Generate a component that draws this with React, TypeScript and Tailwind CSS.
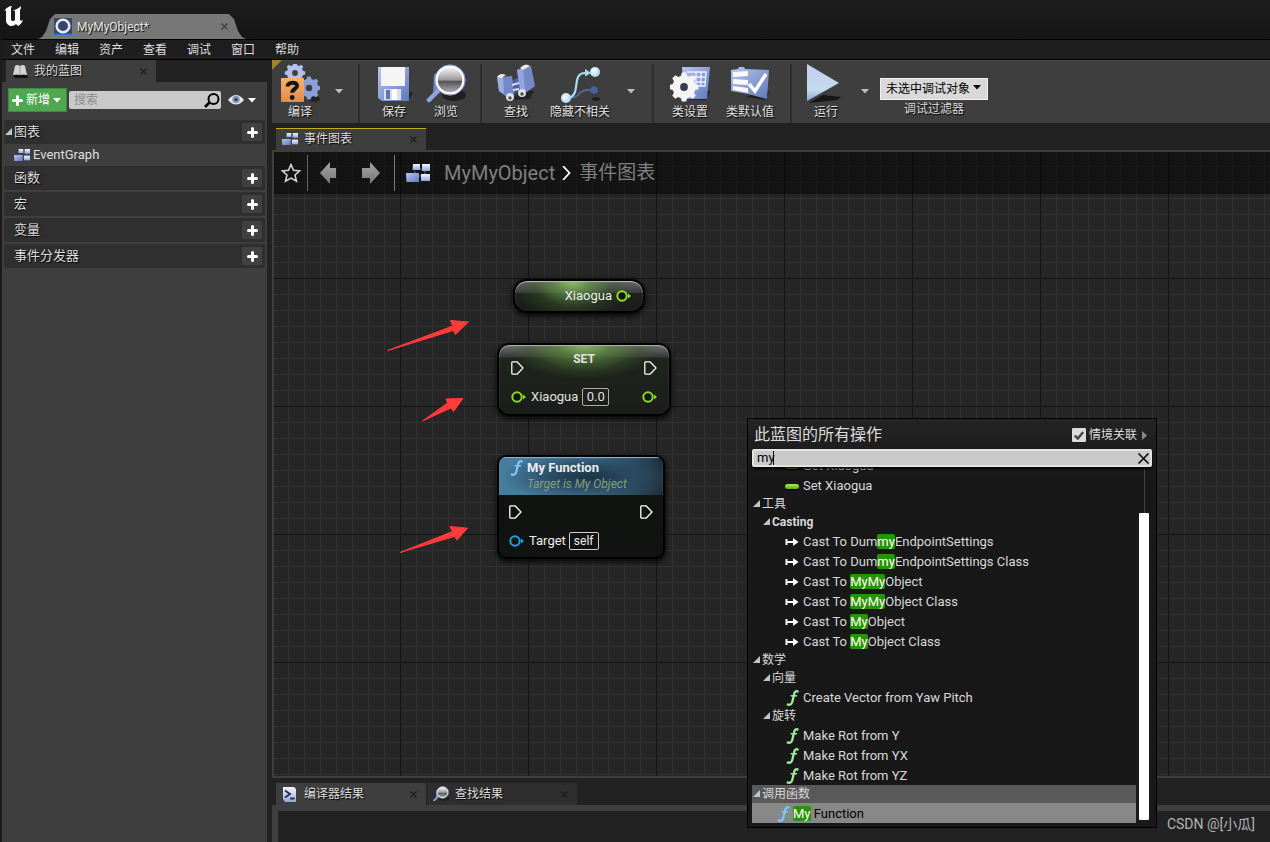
import type { ReactNode } from "react";

const menus = ["文件", "编辑", "资产", "查看", "调试", "窗口", "帮助"];

const sections = [
  { name: "图表", open: true, items: ["EventGraph"] },
  { name: "函数", open: false, items: [] },
  { name: "宏", open: false, items: [] },
  { name: "变量", open: false, items: [] },
  { name: "事件分发器", open: false, items: [] },
];

type Row = {
  kind: "group" | "sub" | "item";
  icon?: "pill" | "cast" | "func" | "call";
  text: string;
  bold?: boolean;
};

const actions: Row[] = [
  { kind: "item", icon: "pill", text: "Get Xiaogua" },
  { kind: "item", icon: "pill", text: "Set Xiaogua" },
  { kind: "group", text: "工具" },
  { kind: "sub", text: "Casting", bold: true },
  { kind: "item", icon: "cast", text: "Cast To DummyEndpointSettings" },
  { kind: "item", icon: "cast", text: "Cast To DummyEndpointSettings Class" },
  { kind: "item", icon: "cast", text: "Cast To MyMyObject" },
  { kind: "item", icon: "cast", text: "Cast To MyMyObject Class" },
  { kind: "item", icon: "cast", text: "Cast To MyObject" },
  { kind: "item", icon: "cast", text: "Cast To MyObject Class" },
  { kind: "group", text: "数学" },
  { kind: "sub", text: "向量" },
  { kind: "item", icon: "func", text: "Create Vector from Yaw Pitch" },
  { kind: "sub", text: "旋转" },
  { kind: "item", icon: "func", text: "Make Rot from Y" },
  { kind: "item", icon: "func", text: "Make Rot from YX" },
  { kind: "item", icon: "func", text: "Make Rot from YZ" },
];

function Gradients() {
  return (
    <svg className="absolute h-0 w-0" aria-hidden="true">
      <defs>
        <linearGradient id="blue" x1="0" y1="0" x2="1" y2="1">
          <stop offset="0" stopColor="#b9c7ee" />
          <stop offset="1" stopColor="#5e78bd" />
        </linearGradient>
        <linearGradient id="pale" x1="0" y1="0" x2="0" y2="1">
          <stop offset="0" stopColor="#f4f7ff" />
          <stop offset="1" stopColor="#93a5dc" />
        </linearGradient>
        <linearGradient id="play" x1="0" y1="0" x2="0" y2="1">
          <stop offset="0" stopColor="#c3cdf0" />
          <stop offset="0.7" stopColor="#c2dbee" />
          <stop offset="1" stopColor="#8fa6d8" />
        </linearGradient>
        <linearGradient id="orange" x1="0" y1="0" x2="0" y2="1">
          <stop offset="0" stopColor="#f6b26c" />
          <stop offset="1" stopColor="#e08c48" />
        </linearGradient>
        <linearGradient id="lens" x1="0" y1="0" x2="0" y2="1">
          <stop offset="0" stopColor="#fbfbfb" />
          <stop offset="0.5" stopColor="#9a9a9a" />
          <stop offset="0.55" stopColor="#555" />
          <stop offset="1" stopColor="#b5b5b5" />
        </linearGradient>
        <linearGradient id="arrow" x1="0" y1="0" x2="0" y2="1">
          <stop offset="0" stopColor="#a5a5a5" />
          <stop offset="1" stopColor="#777" />
        </linearGradient>
        <radialGradient id="ball" cx="0.4" cy="0.4">
          <stop offset="0" stopColor="#fff" />
          <stop offset="1" stopColor="#b4dcf5" />
        </radialGradient>
      </defs>
    </svg>
  );
}

function Close() {
  return (
    <svg className="h-[7px] w-[7px]" viewBox="0 0 7 7" stroke="#1c1c1c" strokeWidth="1.1">
      <path d="M.5 .5l6 6M6.5 .5l-6 6" />
    </svg>
  );
}

function Caret({ color }: { color: string }) {
  return (
    <svg className="h-[5px] w-2 shrink-0" viewBox="0 0 8 5" fill={color}>
      <path d="M0 0h8L4 4.6z" />
    </svg>
  );
}

function Expander() {
  return (
    <svg className="mb-0.5 h-[7px] w-[7px] shrink-0" viewBox="0 0 7 7" fill="#c4c4c4">
      <path d="M7 0v7H0z" />
    </svg>
  );
}

function Plus() {
  return (
    <svg className="h-[11px] w-[11px] shrink-0" viewBox="0 0 11 11" stroke="#fff" strokeWidth="3" strokeLinecap="round">
      <path d="M5.5 1.5v8M1.5 5.5h8" />
    </svg>
  );
}

function GraphIcon({ className }: { className: string }) {
  return (
    <svg className={className} viewBox="0 0 24 18">
      <path d="M10 5H17M12 12H18M9 7v4M19 7v4" stroke="#5b6a94" fill="none" />
      <path d="M7 0h7v6H6.500z" fill="url(#pale)" />
      <path d="M16 0h8v7h-8z" fill="url(#pale)" />
      <path d="M0 9h13v9H.500z" fill="url(#blue)" />
      <path d="M15 10h9v7h-9z" fill="url(#pale)" />
    </svg>
  );
}

function FuncIcon({ color }: { color: string }) {
  return (
    <svg className="h-4 w-3.5 shrink-0" viewBox="0 0 14 16" fill="none" stroke={color}>
      <path d="M13.500 2C11 .200 9.600 1.500 9 4.500L7.400 11.500C6.700 14.600 4.800 15.400 1.800 14.200" strokeWidth="2.300" />
      <path d="M5.600 5.800h6.400" strokeWidth="1.500" />
    </svg>
  );
}

const gear =
  "M-2-10h4l.8 3 2.600 1.100 2.700-1.600 2.800 2.800-1.600 2.700 1.100 2.600 3 .8v4l-3 .8-1.100 2.600 1.600 2.700-2.800 2.800-2.700-1.600-2.600 1.100-.8 3h-4l-.8-3-2.600-1.100-2.700 1.600-2.800-2.800 1.600-2.700-1.100-2.600-3-.8v-4l3-.8 1.100-2.600-1.600-2.700 2.800-2.800 2.700 1.600 2.600-1.100z";

function CompileIcon() {
  return (
    <svg className="h-10 w-10" viewBox="0 0 40 40">
      <ellipse cx="34" cy="35" rx="6" ry="3" fill="#222" />
      <g transform="translate(15 9) scale(.76) translate(0 -3.400)">
        <path d={gear} fill="#b3c0ea" />
        <circle cy="3.400" r="3.800" fill="#3e3e3e" />
      </g>
      <g transform="translate(29 24) scale(.86) translate(0 -3.400)">
        <path d={gear} fill="#8b9fd8" />
        <circle cy="3.400" r="3.800" fill="#3e3e3e" />
      </g>
      <rect x="1" y="14" width="23" height="24" rx="1" fill="url(#orange)" />
      <path d="M7.500 22.500c0-4.500 9.500-5.500 9.500-.500 0 3-4.800 3-4.800 6.800" fill="none" stroke="#151515" strokeWidth="4" />
      <circle cx="12.200" cy="33.500" r="2.400" fill="#151515" />
    </svg>
  );
}

function SaveIcon() {
  return (
    <svg className="h-10 w-10" viewBox="0 0 40 40">
      <path d="M8 36l27-1 4-6-6-3z" fill="#242424" />
      <path d="M4 3h31v34H8l-4-3z" fill="url(#blue)" />
      <path d="M7 3h24v19H7z" fill="#f5f5f5" />
      <path d="M10 25h17v11H10z" fill="#dcdfe8" />
      <path d="M12 26h4v9h-4z" fill="#5b74b4" />
      <path d="M18 25h5v11h-5z" fill="#fff" />
    </svg>
  );
}

function BrowseIcon({ className = "h-10 w-10" }: { className?: string }) {
  return (
    <svg className={className} viewBox="0 0 40 40">
      <ellipse cx="28" cy="31" rx="12" ry="6" fill="#202020" />
      <path d="M8 11l4-3v20l-5 2z" fill="#6f86c4" />
      <path d="M3 36l11-11" stroke="#8ea4df" strokeWidth="4.500" strokeLinecap="round" />
      <circle cx="24" cy="16" r="13.500" fill="url(#lens)" stroke="#fff" strokeWidth="2.500" />
      <circle cx="24" cy="16" r="15.200" fill="none" stroke="#87a0df" strokeWidth="1" />
    </svg>
  );
}

function FindIcon() {
  return (
    <svg className="h-10 w-10" viewBox="0 0 40 40">
      <path d="M15 36l19-1 4-8-10-2z" fill="#242424" />
      <path d="M15 17l10-5v13l-8 5z" fill="#4c629f" />
      <path d="M1 13l15-1 2 18-6 4-9-7z" fill="#7389c8" />
      <path d="M1 13l6-1 1 18-5-3z" fill="#9cade0" />
      <path d="M21 6l14-4 4 20-8 6-7-2z" fill="#7389c8" />
      <path d="M21 6l6-2 2 22-5-1z" fill="#93a5dc" />
      <path d="M1 13q3-5 9-2l-5 3zM24 4q5-6 10-2l-7 4z" fill="#eceae6" />
      <circle cx="14" cy="33" r="4" fill="#dfe1e8" />
      <circle cx="26" cy="29" r="4" fill="#dfe1e8" />
      <circle cx="14" cy="34" r="1.800" fill="#555" />
      <circle cx="26" cy="30" r="1.800" fill="#555" />
      <path d="M16 21l7-2M17 26l6-1" stroke="#d7def4" strokeWidth="2" />
    </svg>
  );
}

function HideIcon() {
  return (
    <svg className="h-10 w-10" viewBox="0 0 40 40" fill="none">
      <ellipse cx="36" cy="35" rx="4" ry="2" fill="#1f1f1f" />
      <path d="M11 34c9 0 6-7 15-8h5" stroke="#4f668f" strokeWidth="1.800" />
      <circle cx="34" cy="26" r="3.800" fill="#486198" />
      <path d="M6 34c17 0 4-25 19-25h3" stroke="#a9dcf5" strokeWidth="2.200" />
      <path d="M25 5l6 4-6 3.500z" fill="#a9dcf5" />
      <circle cx="6" cy="34" r="5" fill="url(#ball)" />
      <circle cx="35" cy="8" r="5" fill="url(#ball)" />
    </svg>
  );
}

function ClassSettingsIcon() {
  return (
    <svg className="h-10 w-10" viewBox="0 0 40 40">
      <path d="M18 36h18l4-9-6-2z" fill="#222" />
      <path d="M12 3h28l-3 32H14z" fill="url(#blue)" />
      <path d="M17 8h19l-1 14H26V8M31 8v14M19 13h16M25 18h11" stroke="#eef2ff" fill="none" strokeWidth="1.300" />
      <g transform="translate(14 23) scale(1.080) translate(0 -3.400)">
        <path d={gear} fill="#f4f4f4" />
        <circle cy="3.400" r="3.600" fill="#343b4b" />
      </g>
    </svg>
  );
}

function DefaultsIcon() {
  return (
    <svg className="h-10 w-10" viewBox="0 0 40 40">
      <path d="M16 33l20 3 3-8-6-3z" fill="#222" />
      <path d="M1 6l7-1 1-2h5l1 2 24 1-2 29-19-5-17-3z" fill="url(#blue)" />
      <path d="M3 8l15-1v5L3 13zM3 15l15 1v5L3 20zM3 22l15 2v5L3 26z" fill="#fafafa" />
      <path d="M19 20l6 7L36 10" stroke="#fff" strokeWidth="3.500" fill="none" />
    </svg>
  );
}

function PlayIcon() {
  return (
    <svg className="h-10 w-10" viewBox="0 0 40 40">
      <path d="M3 39l14-8 18 2-4 3z" fill="#161616" />
      <path d="M1 0l32 19L1 37z" fill="url(#play)" />
    </svg>
  );
}

function ToolButton({ label, width, children }: { label: string; width: string; children: ReactNode }) {
  return (
    <button className={`flex shrink-0 flex-col items-center ${width}`}>
      {children}
      <span className="text-[12px] leading-4 whitespace-nowrap text-[#e2e2e2] [text-shadow:1px_1px_1px_#000]">{label}</span>
    </button>
  );
}

function ToolDrop({ width, label }: { width: string; label: string }) {
  return (
    <button aria-label={label} className={`flex h-[54px] shrink-0 items-center justify-center ${width}`}>
      <Caret color="#bdbdbd" />
    </button>
  );
}

function Divider() {
  return <div className="mx-2 h-[59px] w-0.5 shrink-0 bg-[#2d2d2d]" />;
}

function Toolbar() {
  return (
    <div className="flex h-[63px] items-start border-t border-[#4a4a4a] bg-[#3e3e3e] pt-[3px]">
      <ToolButton label="编译" width="w-14"><CompileIcon /></ToolButton>
      <ToolDrop width="w-[22px]" label="编译选项" />
      <Divider />
      <ToolButton label="保存" width="w-[52px]"><SaveIcon /></ToolButton>
      <ToolButton label="浏览" width="w-[52px]"><BrowseIcon /></ToolButton>
      <Divider />
      <ToolButton label="查找" width="w-[52px]"><FindIcon /></ToolButton>
      <ToolButton label="隐藏不相关" width="w-[76px]"><HideIcon /></ToolButton>
      <ToolDrop width="w-[26px]" label="隐藏选项" />
      <Divider />
      <ToolButton label="类设置" width="w-14"><ClassSettingsIcon /></ToolButton>
      <ToolButton label="类默认值" width="w-16"><DefaultsIcon /></ToolButton>
      <Divider />
      <ToolButton label="运行" width="w-[52px]"><PlayIcon /></ToolButton>
      <ToolDrop width="w-[26px]" label="运行选项" />
      <div className="flex flex-col items-center gap-px pt-3 pl-0.5">
        <div className="relative">
          <select
            id="debug-filter"
            className="h-[22px] w-27 appearance-none border border-[#f0f0f0] bg-[#d9d9d9] pl-[5px] text-[12px] text-black"
          >
            <option>未选中调试对象</option>
          </select>
          <span className="pointer-events-none absolute top-[9px] right-[7px] flex">
            <Caret color="#000" />
          </span>
        </div>
        <label htmlFor="debug-filter" className="text-[12px] leading-4 text-[#dcdcdc] [text-shadow:1px_1px_1px_#000]">
          调试过滤器
        </label>
      </div>
    </div>
  );
}

function Tab({ icon, label, className }: { icon: ReactNode; label: string; className: string }) {
  return (
    <div className={`flex w-[150px] items-center pr-[9px] pl-1.5 ${className}`}>
      <span className="flex w-[22px] shrink-0">{icon}</span>
      <span className="flex-1 text-[12px] leading-4 text-[#dedede] [text-shadow:1px_1px_1px_#000]">{label}</span>
      <button aria-label="关闭"><Close /></button>
    </div>
  );
}

function TitleBar() {
  return (
    <header className="flex h-[39px] items-end bg-gradient-to-b from-[#1d1d1d] to-[#151515]">
      <svg className="mb-3 ml-1 h-[22px] w-5" viewBox="0 0 20 22" fill="#fff">
        <path d="M0 6C2 3 5 1 8 1L7 3v11c0 2 2 3 4 1V6L9 5c3 0 6-2 8-4v2l-1 2v9c0 2 1 2 3 1-1 3-3 5-5 6l-2-2c-2 2-4 2-6 2-2-1-4-3-4-5V7c0-2-1-2-2-1z" />
      </svg>
      <div className="ml-3.5 flex h-[25px] w-[208px] items-center bg-[#777] pr-[18px] pl-4 [clip-path:polygon(0_100%,4px_92%,8px_68%,12px_20%,17px_0,calc(100%-17px)_0,calc(100%-12px)_20%,calc(100%-8px)_68%,calc(100%-4px)_92%,100%_100%)]">
        <svg className="h-[17px] w-[18px] shrink-0" viewBox="0 0 18 17">
          <path d="M0 0h18v17H0z" fill="#35476d" />
          <path d="M0 15.500h18V17H0z" fill="#2c6cf0" />
          <circle cx="9" cy="8" r="6.300" fill="none" stroke="#e8e8e8" strokeWidth="2.600" />
        </svg>
        <span className="ml-[5px] flex-1 text-[12px] leading-4 text-[#e6e6e6] [text-shadow:1px_1px_1px_#000]">MyMyObject*</span>
        <button aria-label="关闭" className="opacity-60"><Close /></button>
      </div>
    </header>
  );
}

function BlueprintPanel() {
  return (
    <aside className="flex w-[267px] shrink-0 flex-col pl-0.5">
      <div className="h-[22px] bg-[#222] pl-1">
        <Tab
          label="我的蓝图"
          className="h-[22px] bg-[#3e3e3e]"
          icon={
            <svg className="h-[15px] w-4" viewBox="0 0 16 15">
              <path d="M1 11h14l1 3H3z" fill="#111" />
              <path d="M3 2q2-2 5 0 3-2 5 0l2 9q-4-1-7 0-3-1-7 0z" fill="#d4d4d4" />
              <path d="M8 2v9" stroke="#999" />
            </svg>
          }
        />
      </div>
      <div className="flex-1 bg-[#3e3e3e] px-0.5 pt-1.5">
        <div className="flex h-6 items-center pl-1">
          <button className="flex h-6 w-[59px] items-center justify-center gap-[3px] border border-[#3d8b3f] bg-[#4fa850] pr-0.5 text-[12px] text-white">
            <Plus />
            <span>新增</span>
            <Caret color="#fff" />
          </button>
          <div className="relative ml-0.5">
            <input
              type="text"
              aria-label="搜索"
              placeholder="搜索"
              className="block h-[18px] w-38 rounded-[2px] bg-[#c9c9c9] pl-[5px] text-[12px] text-black placeholder:text-[#8d8d8d]"
            />
            <svg className="absolute top-0.5 right-px h-[15px] w-4" viewBox="0 0 16 15" fill="none" stroke="#000">
              <circle cx="9.500" cy="6" r="5" strokeWidth="2" />
              <path d="M5.500 9.500L1 14" strokeWidth="2.600" />
            </svg>
          </div>
          <button aria-label="视图选项" className="ml-[7px] flex items-center gap-1">
            <svg className="h-3 w-4" viewBox="0 0 16 12">
              <path d="M0 6Q8-4 16 6 8 15 0 6z" fill="#e8e8e8" />
              <circle cx="8" cy="5.500" r="3.800" fill="#8797ba" />
              <circle cx="8" cy="5.500" r="1.600" fill="#2b3550" />
            </svg>
            <Caret color="#fff" />
          </button>
        </div>
        <div className="mt-2 flex flex-col">
          {sections.map((section) => (
            <div key={section.name}>
              <div className={`flex h-6 items-center rounded-[2px] bg-[#2f2f2f] pr-[3px] pl-px ${section.open ? "" : "mb-0.5"}`}>
                <span className="flex w-[9px]">{section.open && <Expander />}</span>
                <span className="flex-1 text-[13px] leading-4 text-[#dedede] [text-shadow:1px_1px_1px_#000]">{section.name}</span>
                <button aria-label={`添加${section.name}`} className="flex h-[18px] w-5 items-center justify-center rounded-[2px] bg-[#414141]">
                  <Plus />
                </button>
              </div>
              {section.items.map((item) => (
                <div key={item} className="flex h-[22px] items-center gap-[3px] pl-2.5 text-[13px] text-[#dedede]">
                  <GraphIcon className="h-3 w-4" />
                  <span>{item}</span>
                </div>
              ))}
            </div>
          ))}
        </div>
      </div>
    </aside>
  );
}

function ExecPin() {
  return (
    <svg className="h-3.5 w-[13px] shrink-0" viewBox="0 0 13 14" fill="none" stroke="#fff" strokeWidth="1.300">
      <path d="M1.500 .8h4.500L12 7 6 13.200H1.500L.8 12.500v-11z" strokeLinejoin="round" />
    </svg>
  );
}

function DataPin({ color }: { color: string }) {
  return (
    <svg className="h-3 w-[15px] shrink-0" viewBox="0 0 15 12">
      <circle cx="6" cy="6" r="4.700" fill="#10180c" stroke={color} strokeWidth="2" />
      <path d="M12 3.500L15 6l-3 2.500z" fill={color} />
    </svg>
  );
}

function RedArrow({ className, viewBox, points }: { className: string; viewBox: string; points: string }) {
  return (
    <svg className={`absolute ${className}`} viewBox={viewBox}>
      <polygon points={points} fill="#ff3b3b" stroke="#ff3b3b" strokeLinejoin="round" />
    </svg>
  );
}

function GraphNodes() {
  return (
    <>
      <div className="absolute top-[127px] left-[239px] flex h-[34px] w-[132px] items-center justify-end gap-1 rounded-[14px] border-2 border-black bg-[radial-gradient(ellipse_60px_40px_at_45%_0,#8fbe66_0,#64914acc_30%,#3c5c2a66_65%,transparent_100%),linear-gradient(#6a6a6a_0,#3a3a3a_38%,#1c211a_42%,#1c1c1c_100%)] pr-3 text-[13px] text-[#ececec] shadow-[0_2px_6px_#000] inset-shadow-[0_1px_1px_#bbb]">
        <span>Xiaogua</span>
        <DataPin color="#93e22e" />
      </div>

      <div className="absolute top-[191px] left-[223px] flex h-[73px] w-[174px] flex-col rounded-[12px] border-2 border-black bg-[radial-gradient(ellipse_76px_34px_at_50%_0,#8fbe66_0,#5f8a42cc_35%,#3c5c2a66_75%,transparent_100%),linear-gradient(#747474_0,#3a3a3a_12px,#1f241d_13px,#1b1d1a_100%)] px-3 pt-1.5 text-[13px] text-[#ececec] opacity-95 shadow-[0_2px_6px_#000] inset-shadow-[0_1px_1px_#bbb]">
        <div className="flex h-6 items-start justify-between">
          <span className="flex pt-2.5"><ExecPin /></span>
          <span className="text-[12px] leading-4 font-bold">SET</span>
          <span className="flex pt-2.5"><ExecPin /></span>
        </div>
        <div className="mt-[13px] flex items-center">
          <DataPin color="#93e22e" />
          <span className="ml-[5px] leading-4">Xiaogua</span>
          <input aria-label="Xiaogua" defaultValue="0.0" className="ml-1 h-[18px] w-[27px] rounded-[2px] border border-[#b5b5b5] bg-transparent text-center" />
          <span className="ml-auto flex"><DataPin color="#93e22e" /></span>
        </div>
      </div>

      <div className="absolute top-[303px] left-[223px] flex h-[104px] w-[168px] flex-col overflow-hidden rounded-[9px] border-2 border-black bg-[#10120f]/95 text-[13px] text-[#ececec] shadow-[0_2px_6px_#000]">
        <div className="flex h-[38px] bg-[radial-gradient(ellipse_90px_26px_at_56%_52%,#1c3446_0,#284a60_40%,transparent_100%),linear-gradient(90deg,#477c9c_0,#477c9c_55%,#1d2b34_100%)] pt-[3px] pl-2.5 inset-shadow-[0_1px_1px_#8ab6d2]">
          <FuncIcon color="#7cc6ff" />
          <div className="ml-1 flex flex-col">
            <span className="leading-4 font-bold">My Function</span>
            <span className="text-[12px] leading-4 text-[#8b9c79] italic">Target is My Object</span>
          </div>
        </div>
        <div className="mt-2.5 flex items-center justify-between px-2.5">
          <ExecPin />
          <ExecPin />
        </div>
        <div className="mt-[13px] flex items-center px-2.5">
          <DataPin color="#1ba3e8" />
          <span className="ml-[5px] leading-4">Target</span>
          <span className="ml-[3px] h-[18px] rounded-[2px] border border-[#d0d0d0] px-1 text-[12px] leading-4">self</span>
        </div>
      </div>

      <RedArrow
        className="top-[166px] left-[112px] h-9 w-21"
        viewBox="0 0 84 36"
        points="1.7,32.5 66.7,8 64.5,2.500 82.5,4 69.500,16.500 67.3,12.500"
      />
      <RedArrow
        className="top-[242px] left-[146px] h-[30px] w-[46px]"
        viewBox="0 0 46 30"
        points="2.500,27 27.500,9 26,5 43,4.500 33.500,17.500 31,14"
      />
      <RedArrow
        className="top-[370px] left-[124px] h-8 w-18"
        viewBox="0 0 72 32"
        points="2,30.500 54.500,9.500 52,4.500 69.500,6.200 59,18 56.500,14.500"
      />
    </>
  );
}

function Highlighted({ text }: { text: string }) {
  return (
    <span className="whitespace-pre">
      {text.split(/((?:my)+)/i).map((part, i) =>
        i % 2 ? (
          <mark key={i} className="rounded-[2px] bg-[#2a9400] text-white">{part}</mark>
        ) : (
          part
        )
      )}
    </span>
  );
}

function ActionIcon({ icon }: { icon: Row["icon"] }) {
  if (icon === "pill") {
    return <span className="h-[5px] w-3.5 rounded-full bg-gradient-to-b from-[#a8ee5a] to-[#5cae12] shadow-[0_1px_1px_#000]" />;
  }
  if (icon === "cast") {
    return (
      <svg className="h-2 w-3.5" viewBox="0 0 14 8" fill="#fff">
        <path d="M.5 1h2v2h5.500V0L13.500 4 8 8V5H2.500v2h-2z" />
      </svg>
    );
  }
  return <FuncIcon color="#a2ec9c" />;
}

function ActionMenu() {
  return (
    <div className="absolute top-[266px] left-[473px] z-10 flex h-[410px] w-[410px] flex-col border border-black bg-[#1a1a1a] bg-gradient-to-b from-[#242424] to-[#181818] to-15% px-1 pb-1">
      <div className="flex h-[30px] items-center pt-0.5 pr-[5px] pl-0.5">
        <h2 className="flex-1 text-[16px] leading-6 text-[#dcdcdc]">此蓝图的所有操作</h2>
        <label className="flex items-center gap-[3px] text-[12px] text-[#dcdcdc]">
          <span className="relative flex">
            <input type="checkbox" defaultChecked className="h-3.5 w-3.5 appearance-none rounded-[1px] bg-[#dcdcdc]" />
            <svg className="pointer-events-none absolute top-0.5 left-0.5 h-2.5 w-2.5" viewBox="0 0 10 10" fill="none" stroke="#444" strokeWidth="2.400">
              <path d="M.8 5.500L3.800 8.500 9.200 2" />
            </svg>
          </span>
          情境关联
        </label>
        <svg className="ml-[5px] h-[9px] w-[5px]" viewBox="0 0 5 9" fill="#8a8a8a">
          <path d="M0 0l5 4.500L0 9z" />
        </svg>
      </div>
      <div className="relative z-10">
        <input
          type="text"
          aria-label="搜索操作"
          defaultValue="my"
          className="block h-[18px] w-full rounded-[2px] border-2 border-[#e2e2e2] bg-[#c9c9c9] pl-[3px] text-[13px] text-black shadow-[0_2px_3px_#000]"
        />
        <span className="absolute top-0.5 left-[21px] h-3.5 w-px bg-black" />
        <button aria-label="清除" className="absolute top-1 right-[3px]">
          <svg className="h-[11px] w-[11px]" viewBox="0 0 11 11" stroke="#000" strokeWidth="1.500">
            <path d="M.5 .5l10 10M10.500 .5l-10 10" />
          </svg>
        </button>
      </div>
      <div className="flex min-h-0 flex-1">
        <div className="flex flex-1 flex-col justify-end overflow-hidden text-[13px] text-[#d8d8d8]">
          {actions.map((row) =>
            row.kind === "item" ? (
              <div key={row.text} className="flex h-5 shrink-0 items-center gap-1 pt-0.5 pl-[33px]">
                <ActionIcon icon={row.icon} />
                <Highlighted text={row.text} />
              </div>
            ) : (
              <div
                key={row.text}
                className={`flex h-[18px] shrink-0 items-center gap-0.5 text-[12px] leading-4 ${row.kind === "sub" ? "pl-[11px]" : "pl-px"} ${row.bold ? "font-bold" : ""}`}
              >
                <Expander />
                <span>{row.text}</span>
              </div>
            )
          )}
          <div className="flex h-[18px] shrink-0 items-center gap-0.5 bg-[#595959] pl-px">
            <Expander />
            <span className="text-[12px] leading-4">调用函数</span>
          </div>
          <div className="flex h-5 shrink-0 items-center gap-[3px] bg-[#888] pt-0.5 pl-6 text-black">
            <FuncIcon color="#7cc6ff" />
            <Highlighted text="My Function" />
          </div>
        </div>
        <div className="flex w-4 flex-col items-center">
          <div className="h-[46px] w-px bg-[#444]" />
          <div className="mb-[3px] w-2.5 flex-1 rounded-[1px] bg-white" />
        </div>
      </div>
    </div>
  );
}

function GraphHeader() {
  return (
    <div className="flex h-[42px] items-center bg-black/50 pl-[7px]">
      <button aria-label="收藏">
        <svg className="h-5 w-5" viewBox="0 0 20 20" fill="none" stroke="#d8d8d8" strokeWidth="1.500">
          <path d="M10 1.500l2.500 5.800 6.300.6-4.800 4.100 1.500 6.200L10 15l-5.500 3.200L6 12 1.200 7.900l6.300-.6z" />
        </svg>
      </button>
      <div className="ml-1.5 h-9 w-px bg-[#666]" />
      <button aria-label="后退" className="ml-3">
        <svg className="h-[22px] w-[18px]" viewBox="0 0 18 22" fill="url(#arrow)">
          <path d="M0 11L10 0v6h6v10h-6v6z" />
        </svg>
      </button>
      <button aria-label="前进" className="ml-6">
        <svg className="h-[22px] w-[18px]" viewBox="0 0 18 22" fill="url(#arrow)">
          <path d="M18 11L8 0v6H0v10h8v6z" />
        </svg>
      </button>
      <div className="ml-3.5 h-9 w-px bg-[#777]" />
      <nav className="ml-[11px] flex items-center leading-6 text-[#7f7f7f]">
        <GraphIcon className="h-[18px] w-6" />
        <a href="#blueprint" className="ml-3.5 text-[20px]">MyMyObject</a>
        <svg className="mx-[7px] h-3.5 w-2.5" viewBox="0 0 10 14" fill="none" stroke="#fff" strokeWidth="1.800">
          <path d="M1 0L7.500 7 1 14" />
        </svg>
        <a href="#graph" className="text-[19px]">事件图表</a>
      </nav>
    </div>
  );
}

export default function App() {
  return (
    <div className="flex min-h-screen flex-col bg-[#1b1b1b] font-[Roboto,'Noto_Sans_CJK_SC',sans-serif]">
      <Gradients />
      <TitleBar />
      <nav className="ml-0.5 flex h-[21px] items-center border-y border-black bg-[#1e1e1e] text-[12px] leading-4 text-[#dedede]">
        {menus.map((menu) => (
          <button key={menu} className="w-11 pr-0.5">{menu}</button>
        ))}
      </nav>
      <div className="flex flex-1">
        <BlueprintPanel />
        <main className="flex min-w-0 flex-1 flex-col bg-[#222] pl-[5px]">
          <div className="relative">
            <Toolbar />
            <svg className="absolute top-0 left-0 h-2.5 w-2.5" viewBox="0 0 10 10" fill="#a08426">
              <path d="M0 0h10L0 10z" />
            </svg>
          </div>
          <div className="flex h-[27px] items-end pl-1">
            <Tab
              label="事件图表"
              className="h-[22px] bg-[linear-gradient(#c4ac1c_1px,#3e3e3e_1px)]"
              icon={<GraphIcon className="h-3 w-4" />}
            />
          </div>
          <section className="relative flex-1 border-y-2 border-l-2 border-[#3e3e3e] bg-[#262626] bg-[linear-gradient(90deg,#151515_1px,transparent_1px),linear-gradient(#151515_1px,transparent_1px),linear-gradient(90deg,#323232_1px,transparent_1px),linear-gradient(#323232_1px,transparent_1px)] bg-size-[128px_128px,128px_128px,16px_16px,16px_16px] bg-position-[126px_126px,126px_126px,14px_14px,14px_14px]">
            <GraphHeader />
            <GraphNodes />
            <ActionMenu />
          </section>
          <footer className="relative flex h-16 flex-col pt-[5px]">
            <div className="flex gap-px pl-1">
              <Tab
                label="编译器结果"
                className="h-[22px] bg-[#3e3e3e]"
                icon={
                  <svg className="h-[15px] w-4" viewBox="0 0 16 15">
                    <path d="M1 0h11l2 2v13H3L1 12z" fill="url(#pale)" />
                    <path d="M3 3.500l5 3.500-5 3.500M8 11.500h4.500" stroke="#23314f" strokeWidth="1.900" fill="none" />
                  </svg>
                }
              />
              <Tab label="查找结果" className="h-[22px] bg-[#2e2e2e]" icon={<BrowseIcon className="h-4 w-4" />} />
            </div>
            <div className="flex-1 border-t-6 border-l-6 border-[#3e3e3e] bg-[#222]" />
            <span className="absolute right-[15px] bottom-2 text-[14px] leading-5 text-[#b4b4b4]">CSDN @[小瓜]</span>
          </footer>
        </main>
      </div>
    </div>
  );
}
